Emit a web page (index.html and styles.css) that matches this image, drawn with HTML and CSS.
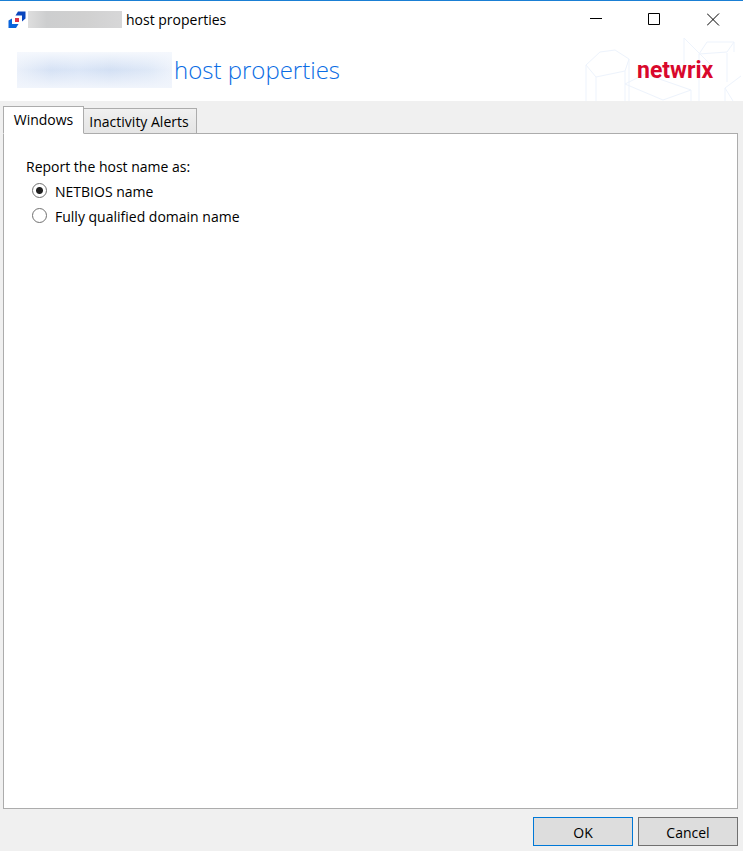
FILE: index.html
```html
<!DOCTYPE html>
<html lang="en">
<head>
<meta charset="utf-8">
<title>host properties</title>
<link rel="stylesheet" href="styles.css">
</head>
<body>
<div class="window">
  <header class="titlebar">
    <svg class="app-icon" viewBox="0 0 18 18" aria-hidden="true">
      <path d="M10 0.500H17.500V7.500L14 10.500V4.500H7.500Z" fill="#0a46be"/>
      <path d="M0.500 9.500L4 7.500V13H10.500L8 17H0.500Z" fill="#0a64dc"/>
      <rect x="7" y="7" width="4" height="4" fill="#dc3448"/>
    </svg>
    <span class="redacted-small"></span>
    <span class="caption">host properties</span>
    <div class="controls">
      <button type="button" aria-label="Minimize"><svg viewBox="0 0 13 13"><path d="M1 5.500H13"/></svg></button>
      <button type="button" aria-label="Maximize"><svg viewBox="0 0 13 13"><path d="M.5 .5H11.5V11.5H.5Z"/></svg></button>
      <button type="button" aria-label="Close"><svg viewBox="0 0 13 13"><path d="M0 .5L12 12.500M12 .5L0 12.500"/></svg></button>
    </div>
  </header>
  <div class="banner">
    <span class="redacted-large"></span>
    <h1>host properties</h1>
    <div class="brand">
      <svg class="pattern" viewBox="0 0 160 64" aria-hidden="true">
        <path d="M3 27L17 14L32 12L46 21L42 33L13 39L3 27V63M13 39V63M42 33V63M46 21V63M42 46L62 36L108 52V63M42 46L80 62L108 52M101 0L128 27M101 0V36M116 16L124 4H151L144 14L116 16V63M144 15V44M151 4V14M142 63V50L158 38M142 50L150 63"/>
      </svg>
      <span class="logo">netwrix</span>
    </div>
  </div>
  <main class="content">
    <div class="tabs" role="tablist">
      <button type="button" class="tab active" role="tab" id="tab-windows" aria-selected="true" aria-controls="panel">Windows</button>
      <button type="button" class="tab" role="tab" aria-selected="false">Inactivity Alerts</button>
    </div>
    <section class="panel" id="panel" role="tabpanel" aria-labelledby="tab-windows">
      <fieldset>
        <legend>Report the host name as:</legend>
        <label><input type="radio" name="host" checked>NETBIOS name</label>
        <label><input type="radio" name="host">Fully qualified domain name</label>
      </fieldset>
    </section>
  </main>
  <footer class="actions">
    <button type="button" class="default">OK</button>
    <button type="button">Cancel</button>
  </footer>
</div>
</body>
</html>
```
FILE: styles.css
```css
* { box-sizing: border-box; }
body {
  margin: 0;
  font: 14px/20px "Open Sans", sans-serif;
  color: #000;
  background: #f0f0f0;
}
button { font: inherit; color: inherit; padding: 0; border-radius: 0; }
.window {
  min-height: 100vh;
  display: flex;
  flex-direction: column;
  border-top: 1px solid #1a7fd4;
}
.titlebar {
  height: 37px;
  padding-left: 8px;
  display: flex;
  align-items: center;
  background: #fff;
}
.app-icon { width: 18px; height: 18px; margin-right: 2px; }
.redacted-small {
  width: 94px;
  height: 17px;
  margin-right: 4px;
  background: linear-gradient(90deg, #dedede, #cdcecf 20%, #d0d0d0 60%, #d7d7d8);
}
.controls { margin-left: auto; display: flex; height: 100%; }
.controls button { width: 59px; border: 0; background: none; display: grid; place-items: center; }
.controls svg { width: 13px; height: 13px; fill: none; stroke: #000; stroke-width: 1; }
.banner {
  height: 63px;
  padding-left: 17px;
  display: flex;
  align-items: center;
  background: #fff;
}
.redacted-large {
  width: 155px;
  height: 36px;
  margin-right: 2px;
  background: linear-gradient(#f5f8fd, #d6e3f500 50%, #f1f5fc), linear-gradient(90deg, #eaf0fa, #d6e2f5 22%, #dbe6f7 40%, #d3e0f4 60%, #dee8f7 85%, #edf2fb);
}
h1 {
  margin: 0;
  font-size: 24px;
  line-height: 36px;
  font-weight: 300;
  color: #0a6ce4;
}
.brand {
  width: 160px;
  height: 100%;
  margin-left: auto;
  display: grid;
  overflow: hidden;
}
.pattern, .logo { grid-area: 1 / 1; }
.pattern { width: 160px; height: 64px; fill: none; stroke: #edf3fc; stroke-width: 1; }
.logo {
  padding: 2px 0 0 54px;
  align-self: center;
  font: 700 23px/26px Roboto, sans-serif;
  color: #d9082c;
}
.content {
  flex: 1;
  padding: 5px 5px 0 3px;
  display: flex;
  flex-direction: column;
}
.tabs { display: flex; align-items: flex-end; height: 28px; }
.tab {
  width: 113px;
  height: 26px;
  padding: 1px 2px 0 0;
  border: 1px solid #acacac;
  border-left: 0;
  background: linear-gradient(#f0f0f0, #e5e5e5);
}
.tab.active {
  z-index: 1;
  width: 81px;
  height: 28px;
  padding: 0;
  border-left: 1px solid #acacac;
  border-bottom-color: #fff;
  background: #fff;
}
.panel {
  flex: 1;
  margin-top: -1px;
  padding: 23px 22px;
  border: 1px solid #acacac;
  background: #fff;
}
fieldset { margin: 0; padding: 0; border: 0; }
legend { padding: 0; margin-bottom: 2px; }
label { display: flex; align-items: center; height: 25px; width: max-content; padding-left: 6px; }
input {
  appearance: none;
  width: 15px;
  height: 15px;
  margin: 0 8px 2px 0;
  border: 1px solid #707070;
  border-radius: 50%;
  background: #fff;
}
input:checked { background: radial-gradient(circle, #212121 3px, #fff 4px); }
.actions {
  display: flex;
  justify-content: flex-end;
  gap: 5px;
  padding: 8px 5px 5px;
}
.actions button { width: 100px; height: 29px; padding-top: 2px; border: 1px solid #707070; background: #ddd; }
.actions .default { border-color: #0078d7; }
```
